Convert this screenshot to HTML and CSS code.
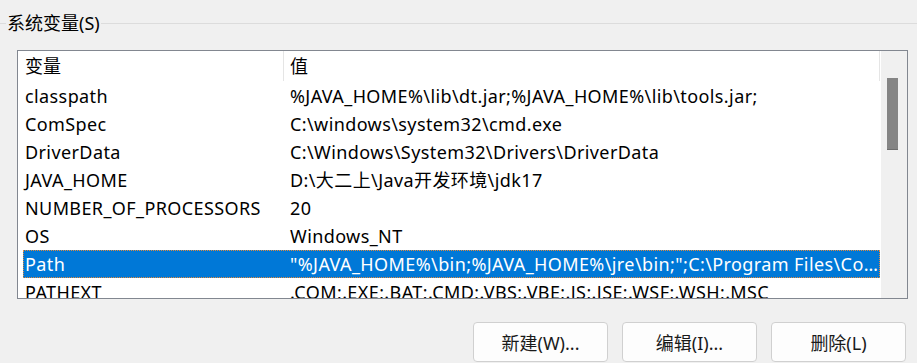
FILE: index.html
```html
<!DOCTYPE html>
<html lang="zh-CN">
<head>
    <meta charset="UTF-8">
    <title>系统变量</title>
    <link rel="stylesheet" href="styles.css">
</head>
<body>
    <div class="group-head">
        <span class="line-short"></span>
        <span class="group-title">系统变量(S)</span>
        <span class="line-long"></span>
    </div>

    <div class="listbox">
        <div class="list-content">
            <div class="row header">
                <div class="col-name">变量</div>
                <div class="col-value">值</div>
            </div>
            <div class="row">
                <div class="col-name">classpath</div>
                <div class="col-value">%JAVA_HOME%\lib\dt.jar;%JAVA_HOME%\lib\tools.jar;</div>
            </div>
            <div class="row">
                <div class="col-name">ComSpec</div>
                <div class="col-value">C:\windows\system32\cmd.exe</div>
            </div>
            <div class="row">
                <div class="col-name">DriverData</div>
                <div class="col-value">C:\Windows\System32\Drivers\DriverData</div>
            </div>
            <div class="row">
                <div class="col-name">JAVA_HOME</div>
                <div class="col-value">D:\大二上\Java开发环境\jdk17</div>
            </div>
            <div class="row">
                <div class="col-name">NUMBER_OF_PROCESSORS</div>
                <div class="col-value">20</div>
            </div>
            <div class="row">
                <div class="col-name">OS</div>
                <div class="col-value">Windows_NT</div>
            </div>
            <div class="row selected">
                <div class="col-name">Path</div>
                <div class="col-value">"%JAVA_HOME%\bin;%JAVA_HOME%\jre\bin;";C:\Program Files\Common Files\Oracle\Java\javapath</div>
            </div>
            <div class="row">
                <div class="col-name">PATHEXT</div>
                <div class="col-value">.COM;.EXE;.BAT;.CMD;.VBS;.VBE;.JS;.JSE;.WSF;.WSH;.MSC</div>
            </div>
        </div>
        <div class="scrollbar">
            <div class="thumb"></div>
        </div>
    </div>

    <div class="buttons">
        <button>新建(W)...</button>
        <button>编辑(I)...</button>
        <button>删除(L)</button>
    </div>
</body>
</html>
```

FILE: styles.css
```css
body {
    margin: 0;
    background-color: #f0f0f0;
    font-family: "Noto Sans", "Noto Sans CJK SC", sans-serif;
    font-size: 18px;
    color: #000;
}

.group-head {
    display: flex;
    align-items: center;
    height: 32px;
    margin-top: 7px;
}

.line-short {
    width: 6px;
    border-top: 1px solid #dcdcdc;
}

.line-long {
    flex: 1;
    border-top: 1px solid #dcdcdc;
}

.group-title {
    padding: 0 1px;
    line-height: 32px;
}

.listbox {
    display: flex;
    margin: 11px 0 0 17px;
    width: 891px;
    height: 249px;
    border: 1px solid #828790;
    box-sizing: border-box;
    background-color: #fff;
    overflow: hidden;
}

.list-content {
    flex: 1;
    padding-left: 5px;
    overflow: hidden;
}

.row {
    display: flex;
    height: 28px;
    line-height: 28px;
    white-space: nowrap;
    letter-spacing: 0.4px;
}

.row.header {
    height: 31px;
    letter-spacing: 0;
}

.col-name {
    width: 261px;
    padding-left: 2px;
    box-sizing: border-box;
    flex-shrink: 0;
}

.header .col-name {
    border-right: 1px solid #e5e5e5;
    height: 30px;
    line-height: 30px;
}

.col-value {
    flex: 1;
    padding-left: 6px;
    overflow: hidden;
    text-overflow: ellipsis;
}

.header .col-value {
    border-right: 1px solid #e5e5e5;
    height: 30px;
    line-height: 30px;
}

.selected {
    background-color: #0078d7;
    color: #fff;
    outline: 1px dotted #e38a3c;
    outline-offset: -1px;
}

.scrollbar {
    width: 26px;
    flex-shrink: 0;
    background-color: #f0f0f0;
    border-left: 1px solid #fff;
}

.thumb {
    margin: 27px 0 0 6px;
    width: 11px;
    height: 71px;
    background-color: #858585;
    border-bottom: 1px solid #6e6e6e;
}

.buttons {
    display: flex;
    justify-content: flex-end;
    gap: 14px;
    margin-top: 23px;
    padding-right: 11px;
}

button {
    width: 135px;
    height: 40px;
    font-family: inherit;
    font-size: 18px;
    background-color: #fdfdfd;
    border: 1px solid #d0d0d0;
    border-radius: 4px;
    color: #1a1a1a;
}
```
